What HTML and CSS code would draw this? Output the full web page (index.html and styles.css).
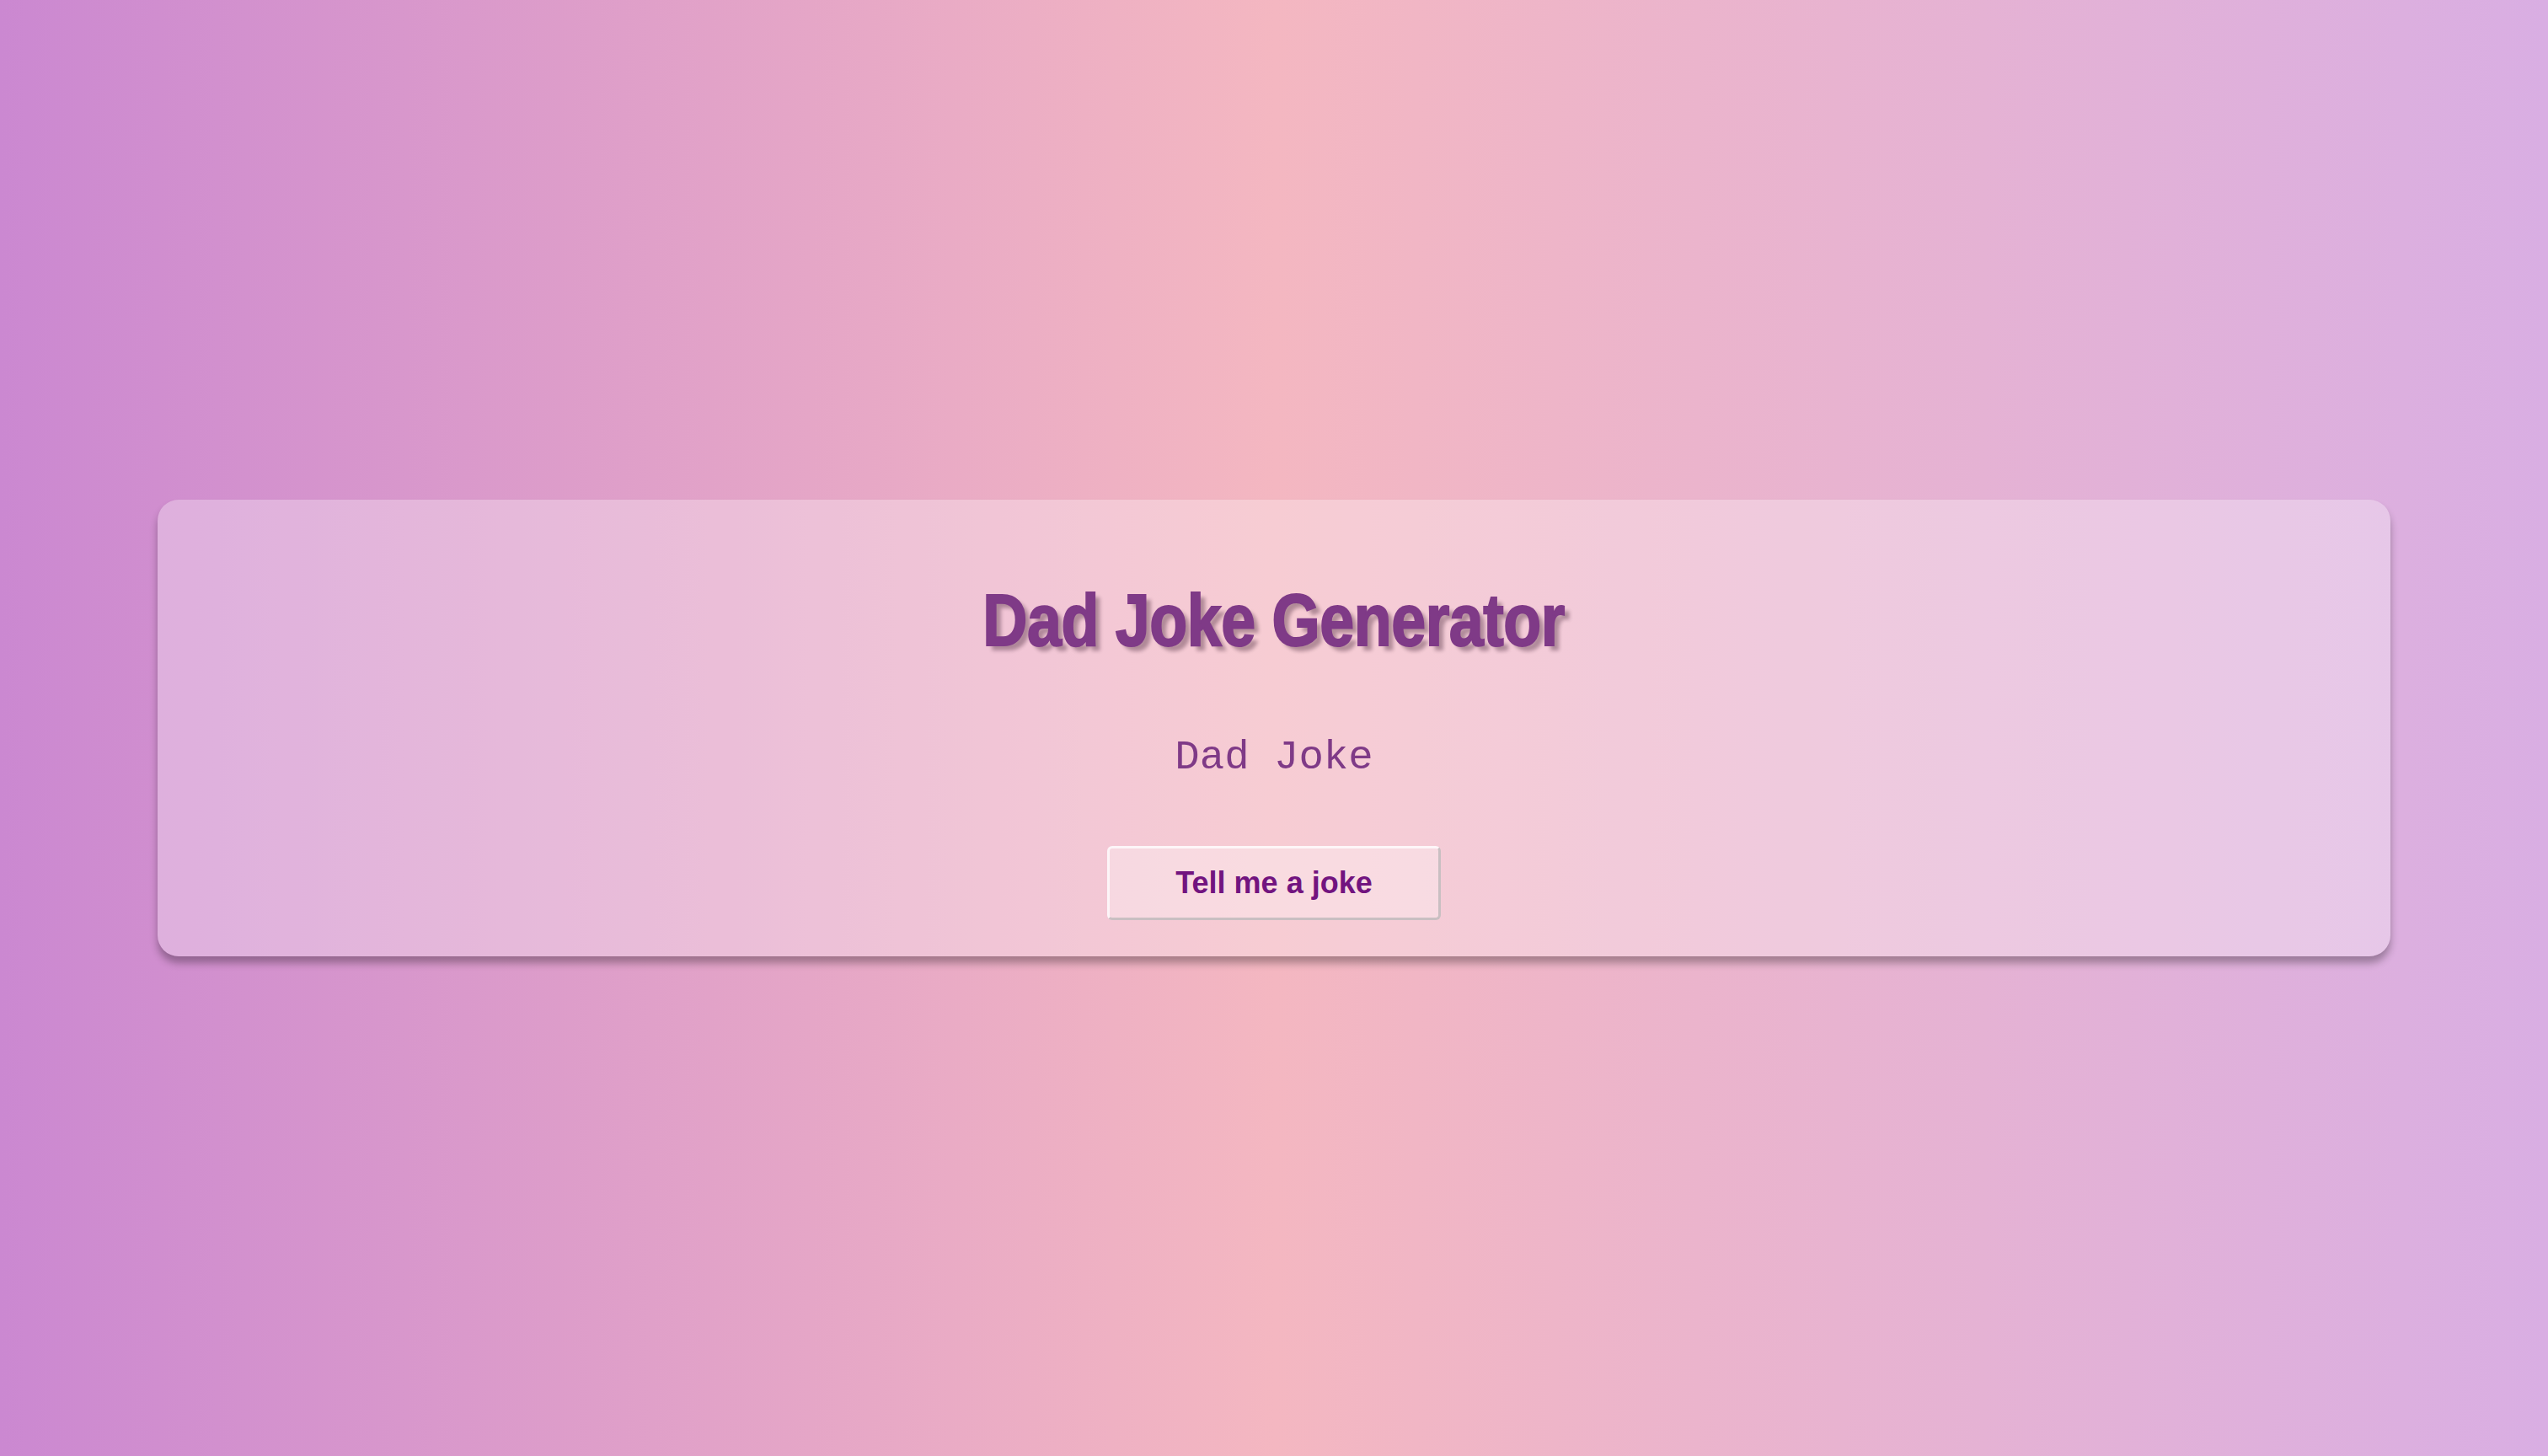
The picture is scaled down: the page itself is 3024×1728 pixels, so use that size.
FILE: index.html
```html
<!DOCTYPE html>
<html lang="en">
<head>
<meta charset="utf-8">
<title>Dad Joke Generator</title>
<link rel="stylesheet" href="styles.css">
</head>
<body>
  <main class="card">
    <h1 class="title">Dad Joke Generator</h1>
    <p class="joke">Dad Joke</p>
    <button class="joke-btn" type="button">Tell me a joke</button>
  </main>
</body>
</html>
```

FILE: styles.css
```css
html, body {
  margin: 0;
  padding: 0;
}

body {
  min-height: 100vh;
  display: flex;
  align-items: center;
  justify-content: center;
  background: linear-gradient(to right, #cb88d1 0%, #f4b7c1 50%, #d9aee3 100%);
  font-family: "Liberation Sans", Arial, sans-serif;
}

.card {
  width: 85%;
  padding: 38px 40px 43px;
  background: rgba(255, 255, 255, 0.3);
  border-radius: 25px;
  box-shadow: 0 8px 10px rgba(0, 0, 0, 0.3);
  display: flex;
  flex-direction: column;
  align-items: center;
  text-align: center;
}

.title {
  margin: 56px 0 0;
  font-family: Impact, "Liberation Sans Narrow", "Liberation Sans", sans-serif;
  font-size: 84px;
  line-height: 98px;
  font-weight: 700;
  letter-spacing: -0.5px;
  color: #7f3a87;
  -webkit-text-stroke: 2px #7f3a87;
  text-shadow: 7px 6px 5px rgba(40, 10, 30, 0.33);
  transform: scale(0.875, 1.04);
}

.joke {
  margin: 86px 0 0;
  font-family: "Liberation Mono", "Courier New", monospace;
  font-size: 49px;
  line-height: 56px;
  color: #7f3a87;
}

.joke-btn {
  margin-top: 77px;
  padding: 20px 78px;
  font-family: "Liberation Sans", Arial, sans-serif;
  font-size: 36px;
  line-height: 42px;
  font-weight: 700;
  color: #72147f;
  background: rgba(255, 255, 255, 0.3);
  border: 3px solid;
  border-color: rgba(255, 255, 255, 0.75) #c9bfc2 #c9bfc2 rgba(255, 255, 255, 0.75);
  border-radius: 6px;
  cursor: pointer;
}
```
